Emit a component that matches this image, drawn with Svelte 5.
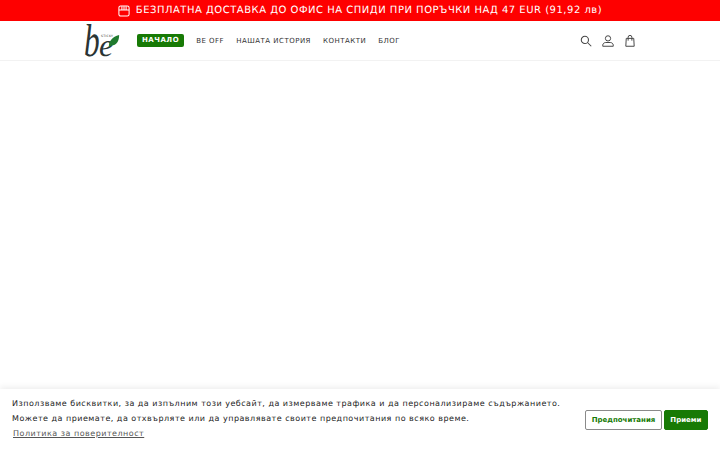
<script>
  const nav = ['BE OFF', 'НАШАТА ИСТОРИЯ', 'КОНТАКТИ', 'БЛОГ'];
</script>

<div class="page">
  <div class="announce">
    <svg class="store" viewBox="0 0 20 20" width="12" height="12" fill="none" stroke="currentColor" stroke-width="1.700">
      <rect x="1.500" y="1.500" width="17" height="17" rx="3" />
      <path d="M1.500 8.500h17M6.500 2v6.500M10 2v6.500M13.500 2v6.500" />
    </svg>
    <span>БЕЗПЛАТНА ДОСТАВКА ДО ОФИС НА СПИДИ ПРИ ПОРЪЧКИ НАД 47 EUR (91,92 лв)</span>
  </div>

  <header class="header">
    <div class="logo">
      <span class="logo-b">b</span>
      <span class="logo-small">STICKY</span>
      <span class="logo-e">e</span>
      <svg class="leaf" viewBox="0 0 14 16" width="12" height="14">
        <path d="M1 15C1 8 5 3 13 1c0 7-3 12-9 12.500L1 15z" fill="#1f7a2e" />
      </svg>
    </div>
    <nav class="nav">
      <a class="nav-active" href="#top">НАЧАЛО</a>
      {#each nav as item}
        <a href="#top">{item}</a>
      {/each}
    </nav>
    <div class="icons">
      <svg viewBox="0 0 16 16" width="12" height="12" fill="none" stroke="#444" stroke-width="1.400">
        <circle cx="6.500" cy="6.500" r="4.800" />
        <path d="M10 10l5 5" />
      </svg>
      <svg viewBox="0 0 16 16" width="12" height="12" fill="none" stroke="#444" stroke-width="1.300">
        <circle cx="8" cy="4.500" r="3.500" />
        <path d="M1 15v-1.500c0-2 2-3.500 4-3.500h6c2 0 4 1.500 4 3.500V15z" />
      </svg>
      <svg viewBox="0 0 16 16" width="12" height="12" fill="none" stroke="#444" stroke-width="1.300">
        <path d="M3 4.500h10l.6 10.500H2.400z" />
        <path d="M5.500 7.500V3a2.500 2.500 0 0 1 5 0v4.500" />
      </svg>
    </div>
  </header>

  <main class="content"></main>

  <aside class="cookie">
    <div class="cookie-text">
      <p>Използваме бисквитки, за да изпълним този уебсайт, да измерваме трафика и да персонализираме съдържанието.</p>
      <p>Можете да приемате, да отхвърляте или да управлявате своите предпочитания по всяко време.</p>
      <a href="#top">Политика за поверителност</a>
    </div>
    <div class="cookie-actions">
      <button class="outline">Предпочитания</button>
      <button class="solid">Приеми</button>
    </div>
  </aside>
</div>

<style>
  :global(body) {
    margin: 0;
    background: #fff;
  }
  .page {
    width: 720px;
    height: 450px;
    display: flex;
    flex-direction: column;
    overflow: hidden;
    font-family: "DejaVu Sans", sans-serif;
    color: #222;
    text-rendering: geometricPrecision;
  }
  .announce {
    height: 21px;
    background: #fe0000;
    color: #fff;
    display: flex;
    align-items: center;
    justify-content: center;
    gap: 6px;
    font-size: 10px;
    letter-spacing: 0.510px;
    flex: none;
  }
  .store {
    flex: none;
  }
  .header {
    height: 39px;
    flex: none;
    display: flex;
    align-items: center;
    padding: 0 84px;
    border-bottom: 1px solid #f2f2f2;
  }
  .logo {
    position: relative;
    width: 36px;
    height: 34px;
    flex: none;
    margin-right: 17px;
  }
  .logo-b {
    position: absolute;
    left: 0;
    top: -7px;
    font-family: "Liberation Serif", serif;
    font-style: italic;
    font-size: 46px;
    line-height: 48px;
    color: #2a3434;
    transform: scaleX(0.68);
    transform-origin: left center;
  }
  .logo-e {
    position: absolute;
    left: 15px;
    top: 14px;
    font-family: "Liberation Serif", serif;
    font-style: italic;
    font-size: 32px;
    line-height: 14px;
    color: #2a3434;
  }
  .logo-small {
    position: absolute;
    left: 17px;
    top: 10px;
    font-size: 3px;
    line-height: 4px;
    letter-spacing: 0.300px;
    color: #333;
  }
  .leaf {
    position: absolute;
    right: 0;
    top: 10px;
  }
  .nav {
    display: flex;
    align-items: center;
    gap: 12px;
  }
  .nav a {
    font-size: 7px;
    letter-spacing: 0.500px;
    color: #333;
    text-decoration: none;
  }
  .nav a.nav-active {
    background: #177a05;
    color: #fff;
    font-weight: 700;
    padding: 2px 5px;
    border-radius: 2px;
    line-height: 9px;
  }
  .icons {
    margin-left: auto;
    display: flex;
    align-items: center;
    gap: 10px;
  }
  .content {
    flex: 1;
  }
  .cookie {
    flex: none;
    height: 61px;
    display: flex;
    align-items: center;
    justify-content: space-between;
    padding: 0 12px;
    box-shadow: 0 -2px 6px rgba(0, 0, 0, 0.07);
  }
  .cookie-text {
    font-size: 8px;
    letter-spacing: 0.490px;
    line-height: 15px;
    color: #222;
    margin-bottom: 2px;
  }
  .cookie-text p {
    margin: 0;
  }
  .cookie-text a {
    margin-left: 1px;
    color: #555;
    text-decoration: underline;
  }
  .cookie-actions {
    display: flex;
    gap: 2px;
  }
  button {
    font-family: "DejaVu Sans", sans-serif;
    font-size: 7px;
    font-weight: 700;
    height: 20px;
    padding: 0 5.500px;
    border-radius: 2px;
    text-rendering: geometricPrecision;
  }
  .outline {
    background: #fff;
    color: #177a05;
    border: 1px solid #8a8a8a;
  }
  .solid {
    background: #177a05;
    color: #fff;
    border: 1px solid #177a05;
  }
</style>
